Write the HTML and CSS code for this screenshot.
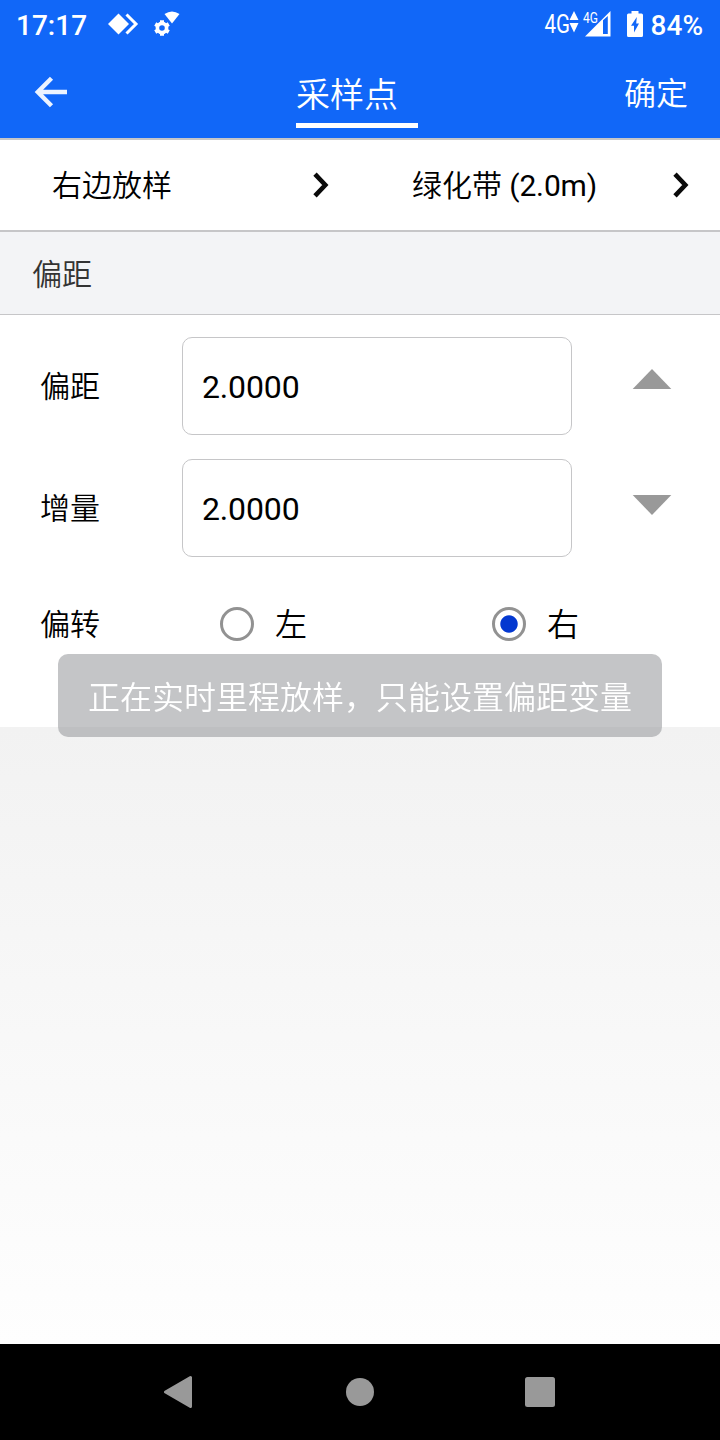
FILE: index.html
```
<!DOCTYPE html>
<html lang="zh-CN">
<head>
  <meta charset="UTF-8">
  <meta name="viewport" content="width=device-width, initial-scale=1.0">
  <title>采样点</title>
  <link rel="stylesheet" href="styles.css">
</head>
<body>
  <!-- Status bar -->
  <div class="status-bar">
    <span class="clock">17:17</span>
    <svg class="icon-app" width="32" height="24" viewBox="0 0 32 24">
      <path d="M0 12 L10.5 1.5 L21 12 L10.5 22.5 Z" fill="#fff"/>
      <path d="M18.5 2.5 L28 12 L18.5 21.5" fill="none" stroke="#fff" stroke-width="3"/>
    </svg>
    <svg class="icon-gear" width="26" height="26" viewBox="0 0 26 26">
      <path d="M10.5 3 Q18 -2 25.5 3 L18 12.5 Z" fill="#fff"/>
      <circle cx="8" cy="17" r="4.6" fill="none" stroke="#fff" stroke-width="3.6"/>
      <path d="M6 9.2 H10 V12 H6 Z M6 22 H10 V24.8 H6 Z" fill="#fff"/>
      <path d="M6 9.2 H10 V12 H6 Z M6 22 H10 V24.8 H6 Z" fill="#fff" transform="rotate(60 8 17)"/>
      <path d="M6 9.2 H10 V12 H6 Z M6 22 H10 V24.8 H6 Z" fill="#fff" transform="rotate(120 8 17)"/>
    </svg>
    <div class="status-right">
      <span class="network">4G</span>
      <svg class="icon-data" width="10" height="22" viewBox="0 0 10 22">
        <path d="M5 0 L9.5 9 H0.5 Z M5 21.5 L9.5 12 H0.5 Z" fill="#fff"/>
      </svg>
      <div class="signal">
        <svg width="26" height="26" viewBox="0 0 26 26">
          <path fill-rule="evenodd" d="M0 25.5 L25.5 0 V25.5 Z M18 9.2 V23 H22.8 V5 Z" fill="#fff"/>
        </svg>
        <span class="signal-label">4G</span>
      </div>
      <svg class="icon-battery" width="16" height="26" viewBox="0 0 16 26">
        <path fill-rule="evenodd" d="M4.5 0 H11.5 V2.5 H14.5 Q16 2.5 16 4 V24.5 Q16 26 14.5 26 H1.5 Q0 26 0 24.5 V4 Q0 2.5 1.5 2.5 H4.5 Z M9.8 6 L4 14.8 H7 V21.5 L12 12.5 H9.2 Z" fill="#fff"/>
      </svg>
      <span class="battery-text">84%</span>
    </div>
  </div>

  <!-- Header -->
  <header class="header">
    <button class="back" aria-label="返回">
      <svg width="34" height="34" viewBox="0 0 34 34">
        <path d="M17.5 3.3 L3.8 17 L17.5 30.7 M3.5 17 H33" fill="none" stroke="#fff" stroke-opacity="0.92" stroke-width="4.4"/>
      </svg>
    </button>
    <h1 class="title">采样点</h1>
    <button class="confirm">确定</button>
  </header>

  <!-- Selectors -->
  <div class="selectors">
    <div class="selector">
      <span class="selector-text">右边放样</span>
      <svg width="18" height="28" viewBox="0 0 18 28">
        <path d="M3 3.2 L13.3 14 L3 24.8" fill="none" stroke="#0a0a0a" stroke-width="4.6"/>
      </svg>
    </div>
    <div class="selector">
      <span class="selector-text">绿化带<span class="latin"> (2.0m)</span></span>
      <svg width="18" height="28" viewBox="0 0 18 28">
        <path d="M3 3.2 L13.3 14 L3 24.8" fill="none" stroke="#0a0a0a" stroke-width="4.6"/>
      </svg>
    </div>
  </div>

  <h2 class="section-title">偏距</h2>

  <!-- Form -->
  <form class="form">
    <div class="row">
      <label class="label" for="offset">偏距</label>
      <input class="field" type="text" id="offset" value="2.0000">
      <svg class="arrow arrow-up" width="40" height="22" viewBox="0 0 40 22">
        <path d="M20 1 L39.3 21 H0.7 Z" fill="#999"/>
      </svg>
    </div>
    <div class="row">
      <label class="label" for="step">增量</label>
      <input class="field" type="text" id="step" value="2.0000">
      <svg class="arrow arrow-down" width="40" height="22" viewBox="0 0 40 22">
        <path d="M20 21 L39.3 1 H0.7 Z" fill="#999"/>
      </svg>
    </div>
    <div class="row row-radio">
      <span class="label">偏转</span>
      <label class="option"><input type="radio" name="turn" class="radio"><span>左</span></label>
      <label class="option"><input type="radio" name="turn" class="radio" checked><span>右</span></label>
    </div>
  </form>

  <main class="empty"></main>

  <div class="toast">正在实时里程放样，只能设置偏距变量</div>

  <!-- Navigation bar -->
  <nav class="nav-bar">
    <svg width="32" height="34" viewBox="0 0 32 34">
      <path d="M1.5 17 L26.5 2.5 V31.5 Z" fill="#999" stroke="#999" stroke-width="3" stroke-linejoin="round"/>
    </svg>
    <svg width="32" height="34" viewBox="0 0 32 34">
      <circle cx="16" cy="17" r="14" fill="#999"/>
    </svg>
    <svg width="32" height="34" viewBox="0 0 32 34">
      <rect x="1" y="2" width="30" height="30" rx="2.5" fill="#999"/>
    </svg>
  </nav>
</body>
</html>
```
FILE: styles.css
```
* {
  box-sizing: border-box;
}
body {
  margin: 0;
  height: 1440px;
  display: flex;
  flex-direction: column;
  font-family: Roboto, "Noto Sans CJK SC", sans-serif;
  font-weight: 350;
  color: #000;
  background-color: #fff;
  overflow: hidden;
}
svg {
  display: block;
  flex-shrink: 0;
}
button {
  padding: 0;
  border: none;
  background: none;
  color: #fff;
  font-family: inherit;
  font-weight: inherit;
}

/* Status bar */
.status-bar {
  height: 48px;
  display: flex;
  align-items: center;
  padding: 0 17px 0 16px;
  background-color: #1167f8;
  color: #fff;
}
.clock {
  width: 92px;
  font-size: 28px;
  font-weight: 500;
  line-height: 50px;
  margin-top: 3px;
}
.icon-gear {
  margin-left: 14px;
}
.status-right {
  display: flex;
  align-items: center;
  margin-left: auto;
}
.network {
  margin-top: 1px;
  font-size: 25px;
  font-weight: 400;
  transform: scaleX(0.82);
  transform-origin: right;
}
.icon-data {
  margin: -4px 0 0 -2px;
}
.signal {
  position: relative;
  margin: 0 16px 0 6px;
}
.signal-label {
  position: absolute;
  top: 0;
  left: -2px;
  font-size: 14px;
  font-weight: 400;
  line-height: 15px;
  transform: scaleX(0.86);
  transform-origin: left;
}
.battery-text {
  margin: 2px 0 0 8px;
  font-size: 28px;
  font-weight: 500;
}

/* Header */
.header {
  height: 92px;
  display: grid;
  grid-template-columns: 296px 122px 1fr;
  background-color: #1167f8;
  border-bottom: 2px solid #c6c6c8;
}
.back {
  justify-self: start;
  align-self: start;
  margin: 27px 0 0 34px;
}
.title {
  height: 80px;
  margin: 0;
  border-bottom: 5px solid #fff;
  color: #fff;
  font-size: 34px;
  font-weight: 350;
  line-height: 94px;
}
.confirm {
  justify-self: end;
  margin-right: 32px;
  padding-bottom: 4px;
  font-size: 32px;
}

/* Selectors */
.selectors {
  height: 92px;
  display: grid;
  grid-template-columns: 1fr 1fr;
  border-bottom: 2px solid #c6c6c8;
}
.selector {
  display: flex;
  align-items: center;
  justify-content: space-between;
  padding: 0 30px 0 52px;
  font-size: 30px;
}
.selector-text {
  padding-bottom: 4px;
}
.latin {
  font-weight: 400;
  letter-spacing: -0.15px;
}
.section-title {
  height: 83px;
  margin: 0;
  padding-left: 32px;
  border-bottom: 1px solid #c6c6c8;
  background-color: #f3f4f6;
  color: #333;
  font-size: 30px;
  font-weight: 350;
  line-height: 86px;
}

/* Form */
.form {
  height: 412px;
  padding: 22px 48px 0 40px;
}
.row {
  height: 98px;
  display: flex;
  align-items: center;
  margin-bottom: 24px;
}
.label {
  width: 142px;
  flex-shrink: 0;
  padding-bottom: 4px;
  font-size: 30px;
}
.field {
  width: 390px;
  height: 98px;
  padding: 2px 19px 0;
  border: 1px solid #c6c6c8;
  border-radius: 10px;
  background-color: #fff;
  color: #000;
  font-family: inherit;
  font-size: 32px;
  letter-spacing: -0.15px;
}
.arrow {
  margin-left: auto;
}
.arrow-up {
  margin-bottom: 15px;
}
.arrow-down {
  margin-top: -6px;
}
.row-radio {
  height: 86px;
  margin: 0;
}
.option {
  width: 272px;
  flex-shrink: 0;
  display: flex;
  align-items: center;
  padding-left: 38px;
  font-size: 32px;
}
.option span {
  padding-bottom: 4px;
}
.radio {
  appearance: none;
  width: 34px;
  height: 34px;
  margin: 0 21px 0 0;
  border: 3px solid #929292;
  border-radius: 50%;
  background-color: #fff;
}
.radio:checked {
  background: radial-gradient(circle, #0438d0 8.2px, #fff 9.2px);
}

.empty {
  flex: 1;
  background: linear-gradient(#f2f2f2, #fefefe);
}

/* Toast over the page */
.toast {
  position: fixed;
  top: 654px;
  left: 58px;
  width: 604px;
  height: 83px;
  border-radius: 10px;
  background-color: rgba(137, 139, 143, 0.5);
  color: #fff;
  font-size: 32px;
  line-height: 88px;
  text-align: center;
  white-space: nowrap;
}

/* Navigation bar */
.nav-bar {
  height: 96px;
  display: flex;
  align-items: center;
  justify-content: center;
  gap: 148px;
  background-color: #000;
}
```
